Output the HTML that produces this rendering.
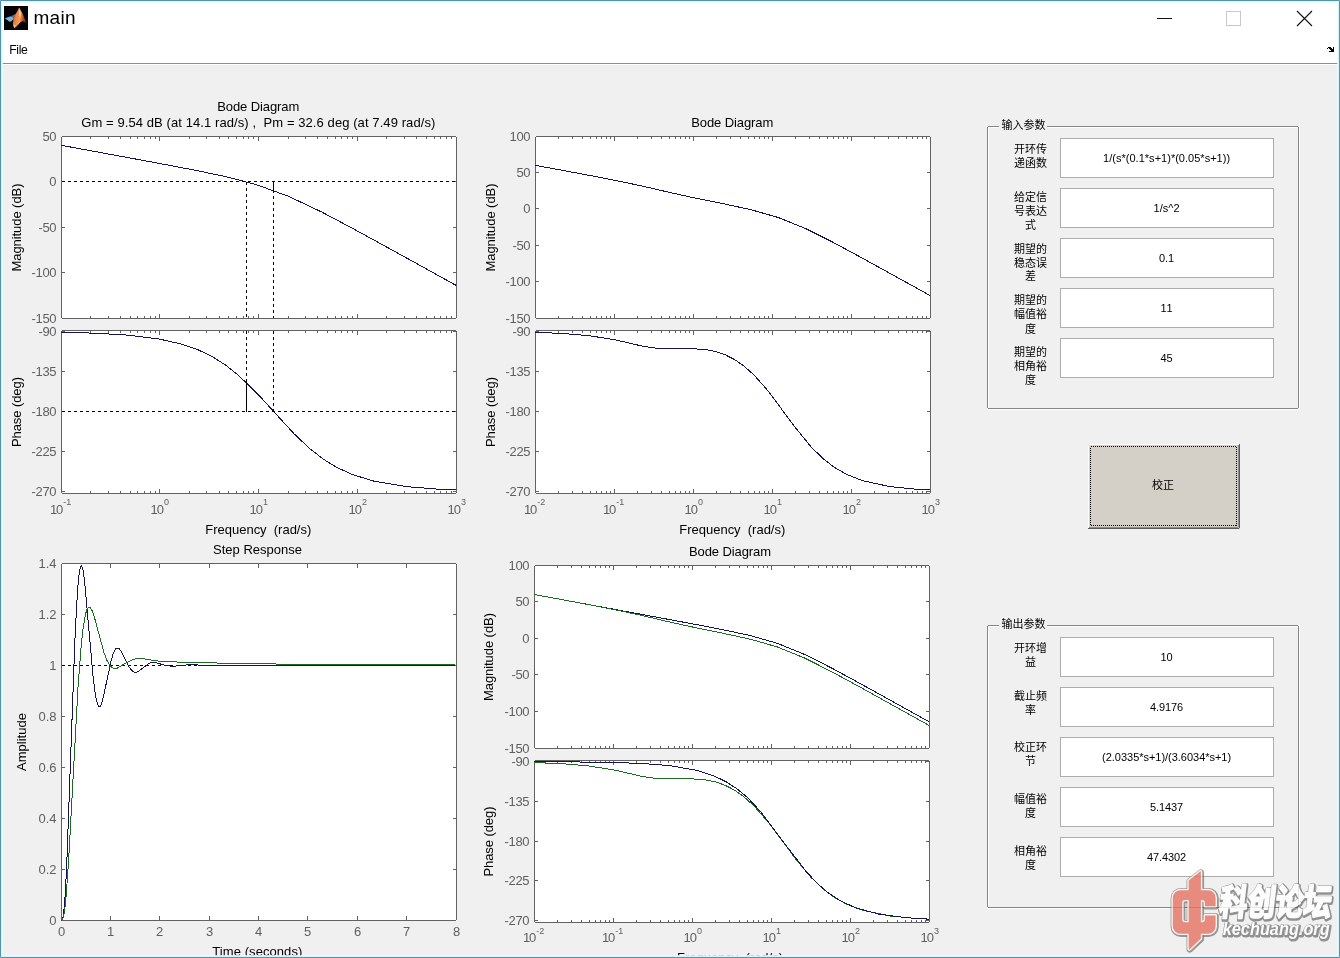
<!DOCTYPE html><html><head><meta charset="utf-8"><title>main</title>
<style>html,body{margin:0;padding:0;background:#f0f0f0;overflow:hidden}body{width:1340px;height:958px;position:relative;font-family:"Liberation Sans","Noto Sans CJK SC",sans-serif}svg{position:absolute;left:0;top:0;display:block;will-change:transform}text{font-family:"Liberation Sans","Noto Sans CJK SC",sans-serif}</style></head><body>
<svg width="1340" height="958" viewBox="0 0 1340 958" font-family="Liberation Sans, Noto Sans CJK SC, sans-serif">
<rect width="1340" height="958" fill="#f0f0f0"/>
<rect width="1340" height="63" fill="#fff"/>
<rect y="63" width="1340" height="1" fill="#8e8e8e"/><rect y="64" width="1340" height="1" fill="#fdfdfd"/>
<g id="icon" transform="translate(4 6)"><rect width="24" height="24" fill="#040407"/><defs><linearGradient id="og" gradientUnits="userSpaceOnUse" x1="8" y1="12" x2="23" y2="14"><stop offset="0" stop-color="#c9611f"/><stop offset=".3" stop-color="#ee8a45"/><stop offset=".52" stop-color="#f39a58"/><stop offset=".75" stop-color="#b04c14"/><stop offset="1" stop-color="#5e2206"/></linearGradient><filter id="ib" x="-10%" y="-10%" width="120%" height="120%"><feGaussianBlur stdDeviation=".45"/></filter><clipPath id="ic"><rect width="24" height="24"/></clipPath></defs><g clip-path="url(#ic)"><g filter="url(#ib)"><path d="M.9 12.3L6.8 10.2L9.8 11.7L9.6 13.4L5.9 15.9Z" fill="#72b5de"/><path d="M6.8 10.2C8.6 9.4 10.4 8.6 12 7.4L9.8 11.7Z" fill="#686a86"/><path d="M15.25 1.6C16.5 4 17.5 5.6 18.5 7.6C19.4 9.6 20 11 20.5 12.6C21.3 14.8 22 16.4 22.9 17.9C21.5 16.6 20 15 18.5 15.3C16.8 15.7 15.6 17.2 14.4 18.5C13.2 19.9 11.8 21.4 10.3 22C9.6 20.6 9.1 19.3 8.8 17.9C8.9 16.2 9.3 14.6 9.7 13.2L9.8 11.4C10.6 10 11.4 8.8 12 7.6C12.7 6.3 13.6 4.6 15.25 1.6Z" fill="url(#og)"/><path d="M15.25 1.6L16.9 7.6L16.2 12.4L14.9 8.6Z" fill="#fbd6b6" opacity=".85"/><path d="M10.3 22L9.2 18.6L11.8 19.4Z" fill="#f6c98a" opacity=".9"/></g></g></g>
<text x="33.4" y="24.4" font-size="19" fill="#000" text-anchor="start" letter-spacing="0.35">main</text>
<text x="9.2" y="53.7" font-size="12.2" fill="#000" text-anchor="start" letter-spacing="-0.35">File</text>
<path d="M1157 18.5h15" stroke="#111" stroke-width="1" fill="none" shape-rendering="crispEdges"/>
<rect x="1226.5" y="11.5" width="14" height="14" fill="none" stroke="#c8c8c8" stroke-width="1" shape-rendering="crispEdges"/>
<path d="M1297 11L1312 26M1312 11L1297 26" stroke="#111" stroke-width="1.1" fill="none"/>
<path d="M1328 47h3v1h-3zM1333 47h1v1h-1zM1327 48h1v1h-1zM1329 48h3v1h-3zM1333 48h1v1h-1zM1330 49h4v1h-4zM1331 50h3v1h-3zM1329 51h5v1h-5z" fill="#000" shape-rendering="crispEdges"/>
<rect x="61" y="136" width="396" height="183" fill="#fff"/>
<rect x="61" y="330" width="396" height="164" fill="#fff"/>
<clipPath id="c1m"><rect x="62" y="137" width="394" height="181"/></clipPath>
<clipPath id="c1p"><rect x="62" y="331" width="394" height="162"/></clipPath>
<text x="49.9" y="513.7" font-size="13" fill="#5f5f5f" textLength="13.3">10</text><text x="63.3" y="505" font-size="9" fill="#5f5f5f">-1</text>
<text x="150.6" y="513.7" font-size="13" fill="#5f5f5f" textLength="13.3">10</text><text x="164" y="505" font-size="9" fill="#5f5f5f">0</text>
<text x="249.6" y="513.7" font-size="13" fill="#5f5f5f" textLength="13.3">10</text><text x="263" y="505" font-size="9" fill="#5f5f5f">1</text>
<text x="348.6" y="513.7" font-size="13" fill="#5f5f5f" textLength="13.3">10</text><text x="362" y="505" font-size="9" fill="#5f5f5f">2</text>
<text x="447.6" y="513.7" font-size="13" fill="#5f5f5f" textLength="13.3">10</text><text x="461" y="505" font-size="9" fill="#5f5f5f">3</text>
<text x="56.5" y="141.2" font-size="13" fill="#5f5f5f" text-anchor="end"  textLength="14">50</text>
<text x="56.5" y="186.2" font-size="13" fill="#5f5f5f" text-anchor="end" >0</text>
<text x="56.5" y="232.2" font-size="13" fill="#5f5f5f" text-anchor="end"  textLength="18">-50</text>
<text x="56.5" y="277.2" font-size="13" fill="#5f5f5f" text-anchor="end"  textLength="25">-100</text>
<text x="56.5" y="323.2" font-size="13" fill="#5f5f5f" text-anchor="end"  textLength="25">-150</text>
<text x="56.5" y="336.2" font-size="13" fill="#5f5f5f" text-anchor="end"  textLength="18">-90</text>
<text x="56.5" y="376.2" font-size="13" fill="#5f5f5f" text-anchor="end"  textLength="25">-135</text>
<text x="56.5" y="416.2" font-size="13" fill="#5f5f5f" text-anchor="end"  textLength="25">-180</text>
<text x="56.5" y="456.2" font-size="13" fill="#5f5f5f" text-anchor="end"  textLength="25">-225</text>
<text x="56.5" y="496.2" font-size="13" fill="#5f5f5f" text-anchor="end"  textLength="25">-270</text>
<path fill="#626262" shape-rendering="crispEdges" d="M61 136h396v1h-396zM61 318h396v1h-396zM61 136v183h1v-183zM456 136v183h1v-183zM61 330h396v1h-396zM61 493h396v1h-396zM61 330v164h1v-164zM456 330v164h1v-164zM90 316v2h1v-2zM90 137v2h1v-2zM108 316v2h1v-2zM108 137v2h1v-2zM120 316v2h1v-2zM120 137v2h1v-2zM130 316v2h1v-2zM130 137v2h1v-2zM137 316v2h1v-2zM137 137v2h1v-2zM144 316v2h1v-2zM144 137v2h1v-2zM150 316v2h1v-2zM150 137v2h1v-2zM155 316v2h1v-2zM155 137v2h1v-2zM159 314v4h1v-4zM159 137v4h1v-4zM189 316v2h1v-2zM189 137v2h1v-2zM206 316v2h1v-2zM206 137v2h1v-2zM219 316v2h1v-2zM219 137v2h1v-2zM228 316v2h1v-2zM228 137v2h1v-2zM236 316v2h1v-2zM236 137v2h1v-2zM243 316v2h1v-2zM243 137v2h1v-2zM248 316v2h1v-2zM248 137v2h1v-2zM253 316v2h1v-2zM253 137v2h1v-2zM258 314v4h1v-4zM258 137v4h1v-4zM288 316v2h1v-2zM288 137v2h1v-2zM305 316v2h1v-2zM305 137v2h1v-2zM317 316v2h1v-2zM317 137v2h1v-2zM327 316v2h1v-2zM327 137v2h1v-2zM335 316v2h1v-2zM335 137v2h1v-2zM341 316v2h1v-2zM341 137v2h1v-2zM347 316v2h1v-2zM347 137v2h1v-2zM352 316v2h1v-2zM352 137v2h1v-2zM357 314v4h1v-4zM357 137v4h1v-4zM386 316v2h1v-2zM386 137v2h1v-2zM404 316v2h1v-2zM404 137v2h1v-2zM416 316v2h1v-2zM416 137v2h1v-2zM426 316v2h1v-2zM426 137v2h1v-2zM434 316v2h1v-2zM434 137v2h1v-2zM440 316v2h1v-2zM440 137v2h1v-2zM446 316v2h1v-2zM446 137v2h1v-2zM451 316v2h1v-2zM451 137v2h1v-2zM90 491v2h1v-2zM90 331v2h1v-2zM108 491v2h1v-2zM108 331v2h1v-2zM120 491v2h1v-2zM120 331v2h1v-2zM130 491v2h1v-2zM130 331v2h1v-2zM137 491v2h1v-2zM137 331v2h1v-2zM144 491v2h1v-2zM144 331v2h1v-2zM150 491v2h1v-2zM150 331v2h1v-2zM155 491v2h1v-2zM155 331v2h1v-2zM159 489v4h1v-4zM159 331v4h1v-4zM189 491v2h1v-2zM189 331v2h1v-2zM206 491v2h1v-2zM206 331v2h1v-2zM219 491v2h1v-2zM219 331v2h1v-2zM228 491v2h1v-2zM228 331v2h1v-2zM236 491v2h1v-2zM236 331v2h1v-2zM243 491v2h1v-2zM243 331v2h1v-2zM248 491v2h1v-2zM248 331v2h1v-2zM253 491v2h1v-2zM253 331v2h1v-2zM258 489v4h1v-4zM258 331v4h1v-4zM288 491v2h1v-2zM288 331v2h1v-2zM305 491v2h1v-2zM305 331v2h1v-2zM317 491v2h1v-2zM317 331v2h1v-2zM327 491v2h1v-2zM327 331v2h1v-2zM335 491v2h1v-2zM335 331v2h1v-2zM341 491v2h1v-2zM341 331v2h1v-2zM347 491v2h1v-2zM347 331v2h1v-2zM352 491v2h1v-2zM352 331v2h1v-2zM357 489v4h1v-4zM357 331v4h1v-4zM386 491v2h1v-2zM386 331v2h1v-2zM404 491v2h1v-2zM404 331v2h1v-2zM416 491v2h1v-2zM416 331v2h1v-2zM426 491v2h1v-2zM426 331v2h1v-2zM434 491v2h1v-2zM434 331v2h1v-2zM440 491v2h1v-2zM440 331v2h1v-2zM446 491v2h1v-2zM446 331v2h1v-2zM451 491v2h1v-2zM451 331v2h1v-2zM62 181h3v1h-3zM453 181h3v1h-3zM62 227h3v1h-3zM453 227h3v1h-3zM62 272h3v1h-3zM453 272h3v1h-3zM62 331h3v1h-3zM453 331h3v1h-3zM62 371h3v1h-3zM453 371h3v1h-3zM62 411h3v1h-3zM453 411h3v1h-3zM62 451h3v1h-3zM453 451h3v1h-3zM62 491h3v1h-3zM453 491h3v1h-3z"/>
<polyline fill="none" shape-rendering="crispEdges" stroke="#141450" stroke-width="1" points="61.2,145.3 93.65,151.28 126.11,157.27 158.56,163.29 191.02,169.43 223.47,176.09 255.93,184.47 288.38,196.26 320.84,211.58 353.29,228.76 385.75,246.52 418.2,264.42 450.66,282.36 456.2,285.42" clip-path="url(#1m)" />
<polyline fill="none" shape-rendering="crispEdges" stroke="#141450" stroke-width="1" points="61.2,332.26 93.65,333.13 126.11,334.97 158.56,338.88 182.31,344.28 198.94,350.18 213.18,357.19 225.85,365.29 239.31,376.04 261.47,398.1 293.93,433.65 309.76,448.64 323.21,459.07 336.67,467.31 352.5,474.56 373.88,481.13 406.33,486.62 438.79,489.21 456.2,489.97" clip-path="url(#1p)" />
<path d="M62 181.5H456M246.5 181.5V318M273.5 190.18V318" stroke-dasharray="3 3" stroke="#000" stroke-width="1" fill="none" shape-rendering="crispEdges"/>
<path d="M273.5 181.5V190.18" stroke="#000" stroke-width="1" fill="none" shape-rendering="crispEdges"/>
<path d="M62 411.5H456M246.5 331V382.29M273.5 331V411.5" stroke-dasharray="3 3" stroke="#000" stroke-width="1" fill="none" shape-rendering="crispEdges"/>
<path d="M246.5 382.29V411.5" stroke="#000" stroke-width="1" fill="none" shape-rendering="crispEdges"/>
<text x="258.3" y="111" font-size="13" fill="#000" text-anchor="middle"  textLength="82">Bode Diagram</text>
<text x="258.3" y="127" font-size="13" fill="#000" text-anchor="middle" xml:space="preserve" textLength="354">Gm = 9.54 dB (at 14.1 rad/s) ,  Pm = 32.6 deg (at 7.49 rad/s)</text>
<text transform="translate(21 227.5) rotate(-90)" font-size="13" fill="#000" text-anchor="middle" textLength="88">Magnitude (dB)</text>
<text transform="translate(21 412) rotate(-90)" font-size="13" fill="#000" text-anchor="middle" textLength="70">Phase (deg)</text>
<text x="258.3" y="533.5" font-size="13" fill="#000" text-anchor="middle" xml:space="preserve" textLength="106">Frequency  (rad/s)</text>
<rect x="535" y="136" width="396" height="183" fill="#fff"/>
<rect x="535" y="330" width="396" height="164" fill="#fff"/>
<clipPath id="c2m"><rect x="536" y="137" width="394" height="181"/></clipPath>
<clipPath id="c2p"><rect x="536" y="331" width="394" height="162"/></clipPath>
<text x="523.9" y="513.7" font-size="13" fill="#5f5f5f" textLength="13.3">10</text><text x="537.3" y="505" font-size="9" fill="#5f5f5f">-2</text>
<text x="602.9" y="513.7" font-size="13" fill="#5f5f5f" textLength="13.3">10</text><text x="616.3" y="505" font-size="9" fill="#5f5f5f">-1</text>
<text x="684.6" y="513.7" font-size="13" fill="#5f5f5f" textLength="13.3">10</text><text x="698" y="505" font-size="9" fill="#5f5f5f">0</text>
<text x="763.6" y="513.7" font-size="13" fill="#5f5f5f" textLength="13.3">10</text><text x="777" y="505" font-size="9" fill="#5f5f5f">1</text>
<text x="842.6" y="513.7" font-size="13" fill="#5f5f5f" textLength="13.3">10</text><text x="856" y="505" font-size="9" fill="#5f5f5f">2</text>
<text x="921.6" y="513.7" font-size="13" fill="#5f5f5f" textLength="13.3">10</text><text x="935" y="505" font-size="9" fill="#5f5f5f">3</text>
<text x="530.5" y="141.2" font-size="13" fill="#5f5f5f" text-anchor="end"  textLength="21">100</text>
<text x="530.5" y="177.2" font-size="13" fill="#5f5f5f" text-anchor="end"  textLength="14">50</text>
<text x="530.5" y="213.2" font-size="13" fill="#5f5f5f" text-anchor="end" >0</text>
<text x="530.5" y="250.2" font-size="13" fill="#5f5f5f" text-anchor="end"  textLength="18">-50</text>
<text x="530.5" y="286.2" font-size="13" fill="#5f5f5f" text-anchor="end"  textLength="25">-100</text>
<text x="530.5" y="323.2" font-size="13" fill="#5f5f5f" text-anchor="end"  textLength="25">-150</text>
<text x="530.5" y="336.2" font-size="13" fill="#5f5f5f" text-anchor="end"  textLength="18">-90</text>
<text x="530.5" y="376.2" font-size="13" fill="#5f5f5f" text-anchor="end"  textLength="25">-135</text>
<text x="530.5" y="416.2" font-size="13" fill="#5f5f5f" text-anchor="end"  textLength="25">-180</text>
<text x="530.5" y="456.2" font-size="13" fill="#5f5f5f" text-anchor="end"  textLength="25">-225</text>
<text x="530.5" y="496.2" font-size="13" fill="#5f5f5f" text-anchor="end"  textLength="25">-270</text>
<path fill="#626262" shape-rendering="crispEdges" d="M535 136h396v1h-396zM535 318h396v1h-396zM535 136v183h1v-183zM930 136v183h1v-183zM535 330h396v1h-396zM535 493h396v1h-396zM535 330v164h1v-164zM930 330v164h1v-164zM558 316v2h1v-2zM558 137v2h1v-2zM572 316v2h1v-2zM572 137v2h1v-2zM582 316v2h1v-2zM582 137v2h1v-2zM590 316v2h1v-2zM590 137v2h1v-2zM596 316v2h1v-2zM596 137v2h1v-2zM601 316v2h1v-2zM601 137v2h1v-2zM606 316v2h1v-2zM606 137v2h1v-2zM610 316v2h1v-2zM610 137v2h1v-2zM614 314v4h1v-4zM614 137v4h1v-4zM637 316v2h1v-2zM637 137v2h1v-2zM651 316v2h1v-2zM651 137v2h1v-2zM661 316v2h1v-2zM661 137v2h1v-2zM669 316v2h1v-2zM669 137v2h1v-2zM675 316v2h1v-2zM675 137v2h1v-2zM680 316v2h1v-2zM680 137v2h1v-2zM685 316v2h1v-2zM685 137v2h1v-2zM689 316v2h1v-2zM689 137v2h1v-2zM693 314v4h1v-4zM693 137v4h1v-4zM716 316v2h1v-2zM716 137v2h1v-2zM730 316v2h1v-2zM730 137v2h1v-2zM740 316v2h1v-2zM740 137v2h1v-2zM748 316v2h1v-2zM748 137v2h1v-2zM754 316v2h1v-2zM754 137v2h1v-2zM759 316v2h1v-2zM759 137v2h1v-2zM764 316v2h1v-2zM764 137v2h1v-2zM768 316v2h1v-2zM768 137v2h1v-2zM772 314v4h1v-4zM772 137v4h1v-4zM795 316v2h1v-2zM795 137v2h1v-2zM809 316v2h1v-2zM809 137v2h1v-2zM819 316v2h1v-2zM819 137v2h1v-2zM827 316v2h1v-2zM827 137v2h1v-2zM833 316v2h1v-2zM833 137v2h1v-2zM838 316v2h1v-2zM838 137v2h1v-2zM843 316v2h1v-2zM843 137v2h1v-2zM847 316v2h1v-2zM847 137v2h1v-2zM851 314v4h1v-4zM851 137v4h1v-4zM874 316v2h1v-2zM874 137v2h1v-2zM888 316v2h1v-2zM888 137v2h1v-2zM898 316v2h1v-2zM898 137v2h1v-2zM906 316v2h1v-2zM906 137v2h1v-2zM912 316v2h1v-2zM912 137v2h1v-2zM917 316v2h1v-2zM917 137v2h1v-2zM922 316v2h1v-2zM922 137v2h1v-2zM926 316v2h1v-2zM926 137v2h1v-2zM558 491v2h1v-2zM558 331v2h1v-2zM572 491v2h1v-2zM572 331v2h1v-2zM582 491v2h1v-2zM582 331v2h1v-2zM590 491v2h1v-2zM590 331v2h1v-2zM596 491v2h1v-2zM596 331v2h1v-2zM601 491v2h1v-2zM601 331v2h1v-2zM606 491v2h1v-2zM606 331v2h1v-2zM610 491v2h1v-2zM610 331v2h1v-2zM614 489v4h1v-4zM614 331v4h1v-4zM637 491v2h1v-2zM637 331v2h1v-2zM651 491v2h1v-2zM651 331v2h1v-2zM661 491v2h1v-2zM661 331v2h1v-2zM669 491v2h1v-2zM669 331v2h1v-2zM675 491v2h1v-2zM675 331v2h1v-2zM680 491v2h1v-2zM680 331v2h1v-2zM685 491v2h1v-2zM685 331v2h1v-2zM689 491v2h1v-2zM689 331v2h1v-2zM693 489v4h1v-4zM693 331v4h1v-4zM716 491v2h1v-2zM716 331v2h1v-2zM730 491v2h1v-2zM730 331v2h1v-2zM740 491v2h1v-2zM740 331v2h1v-2zM748 491v2h1v-2zM748 331v2h1v-2zM754 491v2h1v-2zM754 331v2h1v-2zM759 491v2h1v-2zM759 331v2h1v-2zM764 491v2h1v-2zM764 331v2h1v-2zM768 491v2h1v-2zM768 331v2h1v-2zM772 489v4h1v-4zM772 331v4h1v-4zM795 491v2h1v-2zM795 331v2h1v-2zM809 491v2h1v-2zM809 331v2h1v-2zM819 491v2h1v-2zM819 331v2h1v-2zM827 491v2h1v-2zM827 331v2h1v-2zM833 491v2h1v-2zM833 331v2h1v-2zM838 491v2h1v-2zM838 331v2h1v-2zM843 491v2h1v-2zM843 331v2h1v-2zM847 491v2h1v-2zM847 331v2h1v-2zM851 489v4h1v-4zM851 331v4h1v-4zM874 491v2h1v-2zM874 331v2h1v-2zM888 491v2h1v-2zM888 331v2h1v-2zM898 491v2h1v-2zM898 331v2h1v-2zM906 491v2h1v-2zM906 331v2h1v-2zM912 491v2h1v-2zM912 331v2h1v-2zM917 491v2h1v-2zM917 331v2h1v-2zM922 491v2h1v-2zM922 331v2h1v-2zM926 491v2h1v-2zM926 331v2h1v-2zM536 172h3v1h-3zM927 172h3v1h-3zM536 208h3v1h-3zM927 208h3v1h-3zM536 245h3v1h-3zM927 245h3v1h-3zM536 281h3v1h-3zM927 281h3v1h-3zM536 331h3v1h-3zM927 331h3v1h-3zM536 371h3v1h-3zM927 371h3v1h-3zM536 411h3v1h-3zM927 411h3v1h-3zM536 451h3v1h-3zM927 451h3v1h-3zM536 491h3v1h-3zM927 491h3v1h-3z"/>
<polyline fill="none" shape-rendering="crispEdges" stroke="#141450" stroke-width="1" points="535.2,165.32 562.24,170.32 589.27,175.35 616.31,180.56 643.35,186.31 670.38,192.62 697.42,198.52 724.46,203.97 751.49,209.84 778.53,217.59 805.57,228.54 832.6,242.08 859.64,256.68 886.68,271.55 913.71,286.48 930.2,295.6" clip-path="url(#2m)" />
<polyline fill="none" shape-rendering="crispEdges" stroke="#141450" stroke-width="1" points="535.2,332.38 562.24,333.42 589.27,335.66 616.31,340.1 643.35,346.34 661.15,348.85 688.19,348.61 704.67,349.37 715.88,351.58 725.78,355.05 735.01,359.83 744.24,366.26 754.13,375.13 767.98,390.81 795.02,427.15 810.84,446.59 822.71,458.36 833.92,467.05 846.45,474.3 862.94,480.78 889.97,486.61 917.01,489.27 930.2,489.98" clip-path="url(#2p)" />
<text x="732.3" y="127" font-size="13" fill="#000" text-anchor="middle"  textLength="82">Bode Diagram</text>
<text transform="translate(495 227.5) rotate(-90)" font-size="13" fill="#000" text-anchor="middle" textLength="88">Magnitude (dB)</text>
<text transform="translate(495 412) rotate(-90)" font-size="13" fill="#000" text-anchor="middle" textLength="70">Phase (deg)</text>
<text x="732.3" y="533.5" font-size="13" fill="#000" text-anchor="middle" xml:space="preserve" textLength="106">Frequency  (rad/s)</text>
<rect x="61" y="563" width="396" height="358" fill="#fff"/>
<clipPath id="c3"><rect x="62" y="564" width="394" height="356"/></clipPath>
<text x="61.5" y="936" font-size="13" fill="#5f5f5f" text-anchor="middle" >0</text>
<text x="110.5" y="936" font-size="13" fill="#5f5f5f" text-anchor="middle" >1</text>
<text x="159.5" y="936" font-size="13" fill="#5f5f5f" text-anchor="middle" >2</text>
<text x="209.5" y="936" font-size="13" fill="#5f5f5f" text-anchor="middle" >3</text>
<text x="258.5" y="936" font-size="13" fill="#5f5f5f" text-anchor="middle" >4</text>
<text x="307.5" y="936" font-size="13" fill="#5f5f5f" text-anchor="middle" >5</text>
<text x="357.5" y="936" font-size="13" fill="#5f5f5f" text-anchor="middle" >6</text>
<text x="406.5" y="936" font-size="13" fill="#5f5f5f" text-anchor="middle" >7</text>
<text x="456.5" y="936" font-size="13" fill="#5f5f5f" text-anchor="middle" >8</text>
<text x="56.5" y="568.2" font-size="13" fill="#5f5f5f" text-anchor="end"  textLength="18">1.4</text>
<text x="56.5" y="619.2" font-size="13" fill="#5f5f5f" text-anchor="end"  textLength="18">1.2</text>
<text x="56.5" y="670.2" font-size="13" fill="#5f5f5f" text-anchor="end" >1</text>
<text x="56.5" y="721.2" font-size="13" fill="#5f5f5f" text-anchor="end"  textLength="18">0.8</text>
<text x="56.5" y="772.2" font-size="13" fill="#5f5f5f" text-anchor="end"  textLength="18">0.6</text>
<text x="56.5" y="823.2" font-size="13" fill="#5f5f5f" text-anchor="end"  textLength="18">0.4</text>
<text x="56.5" y="874.2" font-size="13" fill="#5f5f5f" text-anchor="end"  textLength="18">0.2</text>
<text x="56.5" y="925.2" font-size="13" fill="#5f5f5f" text-anchor="end" >0</text>
<path fill="#626262" shape-rendering="crispEdges" d="M61 563h396v1h-396zM61 920h396v1h-396zM61 563v358h1v-358zM456 563v358h1v-358zM110 916v4h1v-4zM110 564v4h1v-4zM159 916v4h1v-4zM159 564v4h1v-4zM209 916v4h1v-4zM209 564v4h1v-4zM258 916v4h1v-4zM258 564v4h1v-4zM307 916v4h1v-4zM307 564v4h1v-4zM357 916v4h1v-4zM357 564v4h1v-4zM406 916v4h1v-4zM406 564v4h1v-4zM62 614h3v1h-3zM453 614h3v1h-3zM62 665h3v1h-3zM453 665h3v1h-3zM62 716h3v1h-3zM453 716h3v1h-3zM62 767h3v1h-3zM453 767h3v1h-3zM62 818h3v1h-3zM453 818h3v1h-3zM62 869h3v1h-3zM453 869h3v1h-3z"/>
<path d="M62 665.5H456" stroke-dasharray="3 3" stroke="#000" stroke-width="1" fill="none" shape-rendering="crispEdges"/>
<polyline fill="none" shape-rendering="crispEdges" stroke="#141450" stroke-width="1" points="61.2,920.2 61.69,920.12 61.94,919.94 62.19,919.61 62.43,919.09 62.93,917.38 63.42,914.61 64.16,908.25 65.15,895.48 66.63,867.59 74.78,643.1 76.75,603.46 77.99,585.7 78.98,575.61 79.72,570.42 80.21,568.07 80.7,566.59 80.95,566.16 81.2,565.93 81.44,565.91 81.69,566.08 81.94,566.44 82.43,567.71 83.17,570.9 84.41,579.25 93.05,676.2 95.02,692.18 96.26,699.21 97.24,703.12 97.98,705.07 98.48,705.91 98.97,706.4 99.22,706.51 99.47,706.54 99.96,706.36 100.45,705.86 101.19,704.58 102.43,701.18 111.32,659.89 113.29,653.46 114.53,650.68 115.51,649.17 116.25,648.45 116.99,648.07 117.73,648 118.48,648.24 119.46,648.98 121.19,651.24 129.34,667.31 131.56,670.29 133.29,671.7 134.77,672.28 136.25,672.32 138.22,671.64 148.35,663.74 151.56,662.45 155.26,662.33 165.38,665.53 173.28,666.4 183.4,665.07 193.53,664.78 203.65,665.35 213.77,665.32 223.89,665.12 234.01,665.17 244.13,665.24 254.26,665.2 264.38,665.19 274.5,665.2 284.62,665.2 294.74,665.2 304.87,665.2 314.99,665.2 325.11,665.2 335.23,665.2 345.35,665.2 355.47,665.2 365.6,665.2 375.72,665.2 385.84,665.2 395.96,665.2 406.08,665.2 416.21,665.2 426.33,665.2 436.45,665.2 446.57,665.2 456.2,665.2" clip-path="url(#3)" />
<polyline fill="none" shape-rendering="crispEdges" stroke="#1d6a24" stroke-width="1" points="61.2,920.2 61.69,920.16 62.19,919.87 62.68,919.16 63.18,917.9 63.92,914.8 64.9,908.22 66.14,896.06 68.61,860.55 77.99,687.74 80.95,648.64 82.92,629.98 84.65,618.48 85.89,612.87 86.88,609.83 87.62,608.32 88.11,607.67 88.6,607.27 89.1,607.13 89.59,607.21 90.08,607.52 90.83,608.36 92.06,610.65 94.53,617.78 103.91,652.44 107.12,660.75 109.34,664.68 111.32,666.97 113.04,668.13 114.77,668.61 116.99,668.41 127.12,662.32 133.53,659.21 140.94,658.42 151.06,660.04 161.18,661.52 171.31,661.96 181.43,662.04 191.55,662.25 201.67,662.58 211.79,662.88 221.92,663.11 232.04,663.31 242.16,663.5 252.28,663.67 262.4,663.82 272.53,663.96 282.65,664.08 292.77,664.19 302.89,664.29 313.01,664.38 323.13,664.46 333.26,664.54 343.38,664.6 353.5,664.66 363.62,664.72 373.74,664.76 383.87,664.81 393.99,664.85 404.11,664.88 414.23,664.91 424.35,664.94 434.48,664.97 444.6,664.99 454.72,665.01 456.2,665.01" clip-path="url(#3)" />
<text x="257.5" y="554" font-size="13" fill="#000" text-anchor="middle"  textLength="89">Step Response</text>
<text transform="translate(26 742) rotate(-90)" font-size="13" fill="#000" text-anchor="middle" textLength="58">Amplitude</text>
<text x="257.3" y="955.8" font-size="13" fill="#000" text-anchor="middle"  textLength="90">Time (seconds)</text>
<rect x="534" y="565" width="396" height="184" fill="#fff"/>
<rect x="534" y="760" width="396" height="163" fill="#fff"/>
<clipPath id="c4m"><rect x="535" y="566" width="394" height="182"/></clipPath>
<clipPath id="c4p"><rect x="535" y="761" width="394" height="161"/></clipPath>
<text x="522.9" y="942.2" font-size="13" fill="#5f5f5f" textLength="13.3">10</text><text x="536.3" y="933.5" font-size="9" fill="#5f5f5f">-2</text>
<text x="601.9" y="942.2" font-size="13" fill="#5f5f5f" textLength="13.3">10</text><text x="615.3" y="933.5" font-size="9" fill="#5f5f5f">-1</text>
<text x="683.6" y="942.2" font-size="13" fill="#5f5f5f" textLength="13.3">10</text><text x="697" y="933.5" font-size="9" fill="#5f5f5f">0</text>
<text x="762.6" y="942.2" font-size="13" fill="#5f5f5f" textLength="13.3">10</text><text x="776" y="933.5" font-size="9" fill="#5f5f5f">1</text>
<text x="841.6" y="942.2" font-size="13" fill="#5f5f5f" textLength="13.3">10</text><text x="855" y="933.5" font-size="9" fill="#5f5f5f">2</text>
<text x="920.6" y="942.2" font-size="13" fill="#5f5f5f" textLength="13.3">10</text><text x="934" y="933.5" font-size="9" fill="#5f5f5f">3</text>
<text x="529.5" y="570.2" font-size="13" fill="#5f5f5f" text-anchor="end"  textLength="21">100</text>
<text x="529.5" y="606.2" font-size="13" fill="#5f5f5f" text-anchor="end"  textLength="14">50</text>
<text x="529.5" y="643.2" font-size="13" fill="#5f5f5f" text-anchor="end" >0</text>
<text x="529.5" y="679.2" font-size="13" fill="#5f5f5f" text-anchor="end"  textLength="18">-50</text>
<text x="529.5" y="716.2" font-size="13" fill="#5f5f5f" text-anchor="end"  textLength="25">-100</text>
<text x="529.5" y="753.2" font-size="13" fill="#5f5f5f" text-anchor="end"  textLength="25">-150</text>
<text x="529.5" y="766.2" font-size="13" fill="#5f5f5f" text-anchor="end"  textLength="18">-90</text>
<text x="529.5" y="806.2" font-size="13" fill="#5f5f5f" text-anchor="end"  textLength="25">-135</text>
<text x="529.5" y="846.2" font-size="13" fill="#5f5f5f" text-anchor="end"  textLength="25">-180</text>
<text x="529.5" y="885.2" font-size="13" fill="#5f5f5f" text-anchor="end"  textLength="25">-225</text>
<text x="529.5" y="925.2" font-size="13" fill="#5f5f5f" text-anchor="end"  textLength="25">-270</text>
<path fill="#626262" shape-rendering="crispEdges" d="M534 565h396v1h-396zM534 748h396v1h-396zM534 565v184h1v-184zM929 565v184h1v-184zM534 760h396v1h-396zM534 922h396v1h-396zM534 760v163h1v-163zM929 760v163h1v-163zM557 746v2h1v-2zM557 566v2h1v-2zM571 746v2h1v-2zM571 566v2h1v-2zM581 746v2h1v-2zM581 566v2h1v-2zM589 746v2h1v-2zM589 566v2h1v-2zM595 746v2h1v-2zM595 566v2h1v-2zM600 746v2h1v-2zM600 566v2h1v-2zM605 746v2h1v-2zM605 566v2h1v-2zM609 746v2h1v-2zM609 566v2h1v-2zM613 744v4h1v-4zM613 566v4h1v-4zM636 746v2h1v-2zM636 566v2h1v-2zM650 746v2h1v-2zM650 566v2h1v-2zM660 746v2h1v-2zM660 566v2h1v-2zM668 746v2h1v-2zM668 566v2h1v-2zM674 746v2h1v-2zM674 566v2h1v-2zM679 746v2h1v-2zM679 566v2h1v-2zM684 746v2h1v-2zM684 566v2h1v-2zM688 746v2h1v-2zM688 566v2h1v-2zM692 744v4h1v-4zM692 566v4h1v-4zM715 746v2h1v-2zM715 566v2h1v-2zM729 746v2h1v-2zM729 566v2h1v-2zM739 746v2h1v-2zM739 566v2h1v-2zM747 746v2h1v-2zM747 566v2h1v-2zM753 746v2h1v-2zM753 566v2h1v-2zM758 746v2h1v-2zM758 566v2h1v-2zM763 746v2h1v-2zM763 566v2h1v-2zM767 746v2h1v-2zM767 566v2h1v-2zM771 744v4h1v-4zM771 566v4h1v-4zM794 746v2h1v-2zM794 566v2h1v-2zM808 746v2h1v-2zM808 566v2h1v-2zM818 746v2h1v-2zM818 566v2h1v-2zM826 746v2h1v-2zM826 566v2h1v-2zM832 746v2h1v-2zM832 566v2h1v-2zM837 746v2h1v-2zM837 566v2h1v-2zM842 746v2h1v-2zM842 566v2h1v-2zM846 746v2h1v-2zM846 566v2h1v-2zM850 744v4h1v-4zM850 566v4h1v-4zM873 746v2h1v-2zM873 566v2h1v-2zM887 746v2h1v-2zM887 566v2h1v-2zM897 746v2h1v-2zM897 566v2h1v-2zM905 746v2h1v-2zM905 566v2h1v-2zM911 746v2h1v-2zM911 566v2h1v-2zM916 746v2h1v-2zM916 566v2h1v-2zM921 746v2h1v-2zM921 566v2h1v-2zM925 746v2h1v-2zM925 566v2h1v-2zM557 920v2h1v-2zM557 761v2h1v-2zM571 920v2h1v-2zM571 761v2h1v-2zM581 920v2h1v-2zM581 761v2h1v-2zM589 920v2h1v-2zM589 761v2h1v-2zM595 920v2h1v-2zM595 761v2h1v-2zM600 920v2h1v-2zM600 761v2h1v-2zM605 920v2h1v-2zM605 761v2h1v-2zM609 920v2h1v-2zM609 761v2h1v-2zM613 918v4h1v-4zM613 761v4h1v-4zM636 920v2h1v-2zM636 761v2h1v-2zM650 920v2h1v-2zM650 761v2h1v-2zM660 920v2h1v-2zM660 761v2h1v-2zM668 920v2h1v-2zM668 761v2h1v-2zM674 920v2h1v-2zM674 761v2h1v-2zM679 920v2h1v-2zM679 761v2h1v-2zM684 920v2h1v-2zM684 761v2h1v-2zM688 920v2h1v-2zM688 761v2h1v-2zM692 918v4h1v-4zM692 761v4h1v-4zM715 920v2h1v-2zM715 761v2h1v-2zM729 920v2h1v-2zM729 761v2h1v-2zM739 920v2h1v-2zM739 761v2h1v-2zM747 920v2h1v-2zM747 761v2h1v-2zM753 920v2h1v-2zM753 761v2h1v-2zM758 920v2h1v-2zM758 761v2h1v-2zM763 920v2h1v-2zM763 761v2h1v-2zM767 920v2h1v-2zM767 761v2h1v-2zM771 918v4h1v-4zM771 761v4h1v-4zM794 920v2h1v-2zM794 761v2h1v-2zM808 920v2h1v-2zM808 761v2h1v-2zM818 920v2h1v-2zM818 761v2h1v-2zM826 920v2h1v-2zM826 761v2h1v-2zM832 920v2h1v-2zM832 761v2h1v-2zM837 920v2h1v-2zM837 761v2h1v-2zM842 920v2h1v-2zM842 761v2h1v-2zM846 920v2h1v-2zM846 761v2h1v-2zM850 918v4h1v-4zM850 761v4h1v-4zM873 920v2h1v-2zM873 761v2h1v-2zM887 920v2h1v-2zM887 761v2h1v-2zM897 920v2h1v-2zM897 761v2h1v-2zM905 920v2h1v-2zM905 761v2h1v-2zM911 920v2h1v-2zM911 761v2h1v-2zM916 920v2h1v-2zM916 761v2h1v-2zM921 920v2h1v-2zM921 761v2h1v-2zM925 920v2h1v-2zM925 761v2h1v-2zM535 601h3v1h-3zM926 601h3v1h-3zM535 638h3v1h-3zM926 638h3v1h-3zM535 674h3v1h-3zM926 674h3v1h-3zM535 711h3v1h-3zM926 711h3v1h-3zM535 761h3v1h-3zM926 761h3v1h-3zM535 801h3v1h-3zM926 801h3v1h-3zM535 841h3v1h-3zM926 841h3v1h-3zM535 880h3v1h-3zM926 880h3v1h-3zM535 920h3v1h-3zM926 920h3v1h-3z"/>
<polyline fill="none" shape-rendering="crispEdges" stroke="#141450" stroke-width="1" points="534.2,594.48 561.24,599.49 588.27,604.5 615.31,609.51 642.35,614.52 669.38,619.54 696.42,624.59 723.46,629.79 750.49,635.62 777.53,643.4 804.57,654.41 831.6,668.02 858.64,682.7 885.68,697.66 912.71,712.67 929.2,721.83" clip-path="url(#4m)" />
<polyline fill="none" shape-rendering="crispEdges" stroke="#1d6a24" stroke-width="1" points="534.2,594.48 561.24,599.5 588.27,604.57 615.31,609.8 642.35,615.58 669.38,621.93 696.42,627.87 723.46,633.35 750.49,639.24 777.53,647.03 804.57,658.04 831.6,671.66 858.64,686.34 885.68,701.29 912.71,716.31 929.2,725.47" clip-path="url(#4m)" />
<polyline fill="none" shape-rendering="crispEdges" stroke="#1d6a24" stroke-width="1" points="534.2,762.57 561.24,763.61 588.27,765.84 615.31,770.25 642.35,776.45 660.15,778.94 687.19,778.71 703.67,779.46 715.54,781.83 725.44,785.39 734.67,790.25 743.9,796.77 754.45,806.39 769.62,823.96 796.65,860.21 811.16,877.5 822.37,888.34 833.58,896.85 846.11,903.93 862.6,910.25 889.63,915.93 916.67,918.53 929.2,919.19" clip-path="url(#4p)" />
<polyline fill="none" shape-rendering="crispEdges" stroke="#141450" stroke-width="1" points="534.2,761.78 561.24,761.87 588.27,762.07 615.31,762.51 642.35,763.48 669.38,765.6 696.42,770.26 713.57,775.73 726.09,781.73 737.31,789.06 747.86,797.98 760.39,811.31 787.42,847.21 805.89,871.2 817.76,883.88 828.97,893.41 840.84,901.08 855.34,907.73 878.42,914.04 905.46,917.67 929.2,919.18" clip-path="url(#4p)" />
<text x="730" y="556" font-size="13" fill="#000" text-anchor="middle"  textLength="82">Bode Diagram</text>
<text transform="translate(493.2 657) rotate(-90)" font-size="13" fill="#000" text-anchor="middle" textLength="88">Magnitude (dB)</text>
<text transform="translate(493.2 841.5) rotate(-90)" font-size="13" fill="#000" text-anchor="middle" textLength="70">Phase (deg)</text>
<text x="730" y="962" font-size="13" fill="#000" text-anchor="middle" xml:space="preserve" textLength="106">Frequency  (rad/s)</text>
<path fill="#868686" shape-rendering="crispEdges" d="M987 126h312v1h-312zM987 408h312v1h-312zM987 126v283h1v-283zM1298 126v283h1v-283z"/>
<path fill="#fff" shape-rendering="crispEdges" d="M988 127h310v1h-310zM987 409h313v1h-313zM988 127v281h1v-281zM1299 126v284h1v-284z"/>
<rect x="999" y="125" width="48" height="4" fill="#f0f0f0"/>
<text x="1001.5" y="129" font-size="11" fill="#000">输入参数</text>
<rect x="1060.5" y="138.5" width="213" height="39" fill="#fff" stroke="#adadad" stroke-width="1" shape-rendering="crispEdges"/>
<text x="1166.6" y="162" font-size="11" fill="#000" text-anchor="middle"  textLength="127">1/(s*(0.1*s+1)*(0.05*s+1))</text>
<text x="1030.5" y="153.3" font-size="11" fill="#000" text-anchor="middle">开环传</text>
<text x="1030.5" y="167.4" font-size="11" fill="#000" text-anchor="middle">递函数</text>
<rect x="1060.5" y="188.5" width="213" height="39" fill="#fff" stroke="#adadad" stroke-width="1" shape-rendering="crispEdges"/>
<text x="1166.6" y="212" font-size="11" fill="#000" text-anchor="middle"  textLength="26">1/s^2</text>
<text x="1030.5" y="200.5" font-size="11" fill="#000" text-anchor="middle">给定信</text>
<text x="1030.5" y="214.5" font-size="11" fill="#000" text-anchor="middle">号表达</text>
<text x="1030.5" y="228.6" font-size="11" fill="#000" text-anchor="middle">式</text>
<rect x="1060.5" y="238.5" width="213" height="39" fill="#fff" stroke="#adadad" stroke-width="1" shape-rendering="crispEdges"/>
<text x="1166.6" y="262" font-size="11" fill="#000" text-anchor="middle"  textLength="15">0.1</text>
<text x="1030.5" y="252.6" font-size="11" fill="#000" text-anchor="middle">期望的</text>
<text x="1030.5" y="266.6" font-size="11" fill="#000" text-anchor="middle">稳态误</text>
<text x="1030.5" y="280.2" font-size="11" fill="#000" text-anchor="middle">差</text>
<rect x="1060.5" y="288.5" width="213" height="39" fill="#fff" stroke="#adadad" stroke-width="1" shape-rendering="crispEdges"/>
<text x="1166.6" y="312" font-size="11" fill="#000" text-anchor="middle"  textLength="12">11</text>
<text x="1030.5" y="304.4" font-size="11" fill="#000" text-anchor="middle">期望的</text>
<text x="1030.5" y="318.4" font-size="11" fill="#000" text-anchor="middle">幅值裕</text>
<text x="1030.5" y="332.5" font-size="11" fill="#000" text-anchor="middle">度</text>
<rect x="1060.5" y="338.5" width="213" height="39" fill="#fff" stroke="#adadad" stroke-width="1" shape-rendering="crispEdges"/>
<text x="1166.6" y="362" font-size="11" fill="#000" text-anchor="middle"  textLength="12">45</text>
<text x="1030.5" y="356.3" font-size="11" fill="#000" text-anchor="middle">期望的</text>
<text x="1030.5" y="370.3" font-size="11" fill="#000" text-anchor="middle">相角裕</text>
<text x="1030.5" y="384.4" font-size="11" fill="#000" text-anchor="middle">度</text>
<rect x="1088" y="444" width="152" height="85" fill="#d4d0c8"/>
<path fill="#fff" shape-rendering="crispEdges" d="M1088 444h152v1h-152zM1088 444v85h1v-85z"/>
<path fill="#5a5a5a" shape-rendering="crispEdges" d="M1088 528h152v1h-152zM1239 444v85h1v-85z"/>
<path fill="#8c8c8c" shape-rendering="crispEdges" d="M1089 527h150v1h-150zM1238 445v83h1v-83z"/>
<rect x="1090.5" y="446.5" width="146" height="79" fill="none" stroke="#000" stroke-width="1" stroke-dasharray="1 1" shape-rendering="crispEdges"/>
<text x="1163" y="489.3" font-size="11" fill="#000" text-anchor="middle">校正</text>
<path fill="#868686" shape-rendering="crispEdges" d="M987 625h312v1h-312zM987 907h312v1h-312zM987 625v283h1v-283zM1298 625v283h1v-283z"/>
<path fill="#fff" shape-rendering="crispEdges" d="M988 626h310v1h-310zM987 908h313v1h-313zM988 626v281h1v-281zM1299 625v284h1v-284z"/>
<rect x="999" y="624" width="48" height="4" fill="#f0f0f0"/>
<text x="1001.5" y="628" font-size="11" fill="#000">输出参数</text>
<rect x="1060.5" y="637.5" width="213" height="39" fill="#fff" stroke="#adadad" stroke-width="1" shape-rendering="crispEdges"/>
<text x="1166.6" y="661" font-size="11" fill="#000" text-anchor="middle"  textLength="12">10</text>
<text x="1030.5" y="652.3" font-size="11" fill="#000" text-anchor="middle">开环增</text>
<text x="1030.5" y="666" font-size="11" fill="#000" text-anchor="middle">益</text>
<rect x="1060.5" y="687.5" width="213" height="39" fill="#fff" stroke="#adadad" stroke-width="1" shape-rendering="crispEdges"/>
<text x="1166.6" y="711" font-size="11" fill="#000" text-anchor="middle"  textLength="33">4.9176</text>
<text x="1030.5" y="699.8" font-size="11" fill="#000" text-anchor="middle">截止频</text>
<text x="1030.5" y="713.9" font-size="11" fill="#000" text-anchor="middle">率</text>
<rect x="1060.5" y="737.5" width="213" height="39" fill="#fff" stroke="#adadad" stroke-width="1" shape-rendering="crispEdges"/>
<text x="1166.6" y="761" font-size="11" fill="#000" text-anchor="middle"  textLength="129">(2.0335*s+1)/(3.6034*s+1)</text>
<text x="1030.5" y="751.2" font-size="11" fill="#000" text-anchor="middle">校正环</text>
<text x="1030.5" y="765.2" font-size="11" fill="#000" text-anchor="middle">节</text>
<rect x="1060.5" y="787.5" width="213" height="39" fill="#fff" stroke="#adadad" stroke-width="1" shape-rendering="crispEdges"/>
<text x="1166.6" y="811" font-size="11" fill="#000" text-anchor="middle"  textLength="33">5.1437</text>
<text x="1030.5" y="803.2" font-size="11" fill="#000" text-anchor="middle">幅值裕</text>
<text x="1030.5" y="817.2" font-size="11" fill="#000" text-anchor="middle">度</text>
<rect x="1060.5" y="837.5" width="213" height="39" fill="#fff" stroke="#adadad" stroke-width="1" shape-rendering="crispEdges"/>
<text x="1166.6" y="861" font-size="11" fill="#000" text-anchor="middle"  textLength="39">47.4302</text>
<text x="1030.5" y="855.1" font-size="11" fill="#000" text-anchor="middle">相角裕</text>
<text x="1030.5" y="869.1" font-size="11" fill="#000" text-anchor="middle">度</text>
<defs><path id="wC" d="M1215.6 906.2L1215.6 897.7A7.5 7.5 0 0 0 1208.1 890.2L1180.3 890.2A7.5 7.5 0 0 0 1172.8 897.7L1172.8 926.2A7.5 7.5 0 0 0 1180.3 933.7L1208.1 933.7A7.5 7.5 0 0 0 1215.6 926.2L1215.6 915.4L1204.9 915.4L1204.9 919.3A3 3 0 0 1 1201.9 922.3L1185.2 922.3A3 3 0 0 1 1182.2 919.3L1182.2 902.9A3 3 0 0 1 1185.2 899.9L1201.9 899.9A3 3 0 0 1 1204.9 902.9L1204.9 906.2Z"/><path id="wB" d="M1188.7 880.6L1199.9 871.6Q1200.9 870.9 1200.9 872.2V938.6L1189.7 949.2Q1188.7 949.9 1188.7 948.6Z"/></defs><g id="wm" opacity=".8"><g fill="none" stroke="#5c5c5c" stroke-opacity=".75" stroke-width="5.4" stroke-linejoin="round" transform="translate(.5 .6)"><use href="#wC"/><use href="#wB"/></g><g fill="#fff4f0" stroke="#fff4f0" stroke-width="2.8" stroke-linejoin="round"><use href="#wC"/><use href="#wB"/></g><g fill="#e57264"><use href="#wC"/><use href="#wB"/></g><g transform="matrix(0.9256 0 -0.1478 1.2318 1217.42 915.11)"><text x="1.7" y="0.8" font-size="29" font-weight="bold" textLength="121" lengthAdjust="spacingAndGlyphs" fill="#5c5c5c" stroke="#5c5c5c" stroke-width="4.2" stroke-linejoin="round" opacity=".8">科创论坛</text><text x="1" y="0" font-size="29" font-weight="bold" textLength="121" lengthAdjust="spacingAndGlyphs" fill="#fff" stroke="#fff" stroke-width="1.7" stroke-linejoin="round">科创论坛</text></g><text x="1223.5" y="935.5" font-family="Liberation Sans, sans-serif" font-weight="bold" font-style="italic" font-size="17.6" textLength="107" lengthAdjust="spacingAndGlyphs" fill="#5c5c5c" stroke="#5c5c5c" opacity=".8" stroke-width="3.2" stroke-linejoin="round">kechuang.org</text><text x="1222.7" y="934.7" font-family="Liberation Sans, sans-serif" font-weight="bold" font-style="italic" font-size="17.6" textLength="107" lengthAdjust="spacingAndGlyphs" fill="#fff">kechuang.org</text></g>
<path d="M2.5 2.5H1337.5V955.5H2.5Z" fill="none" stroke="#eefbfd" stroke-opacity=".8" stroke-width="1"/>
<path d="M1.5 1.5H1338.5V956.5H1.5Z" fill="none" stroke="#d6f4fa" stroke-width="1"/>
<path d="M.5 .5H1339.5V957.5H.5Z" fill="none" stroke="#5494a8" stroke-width="1"/>
</svg></body></html>
